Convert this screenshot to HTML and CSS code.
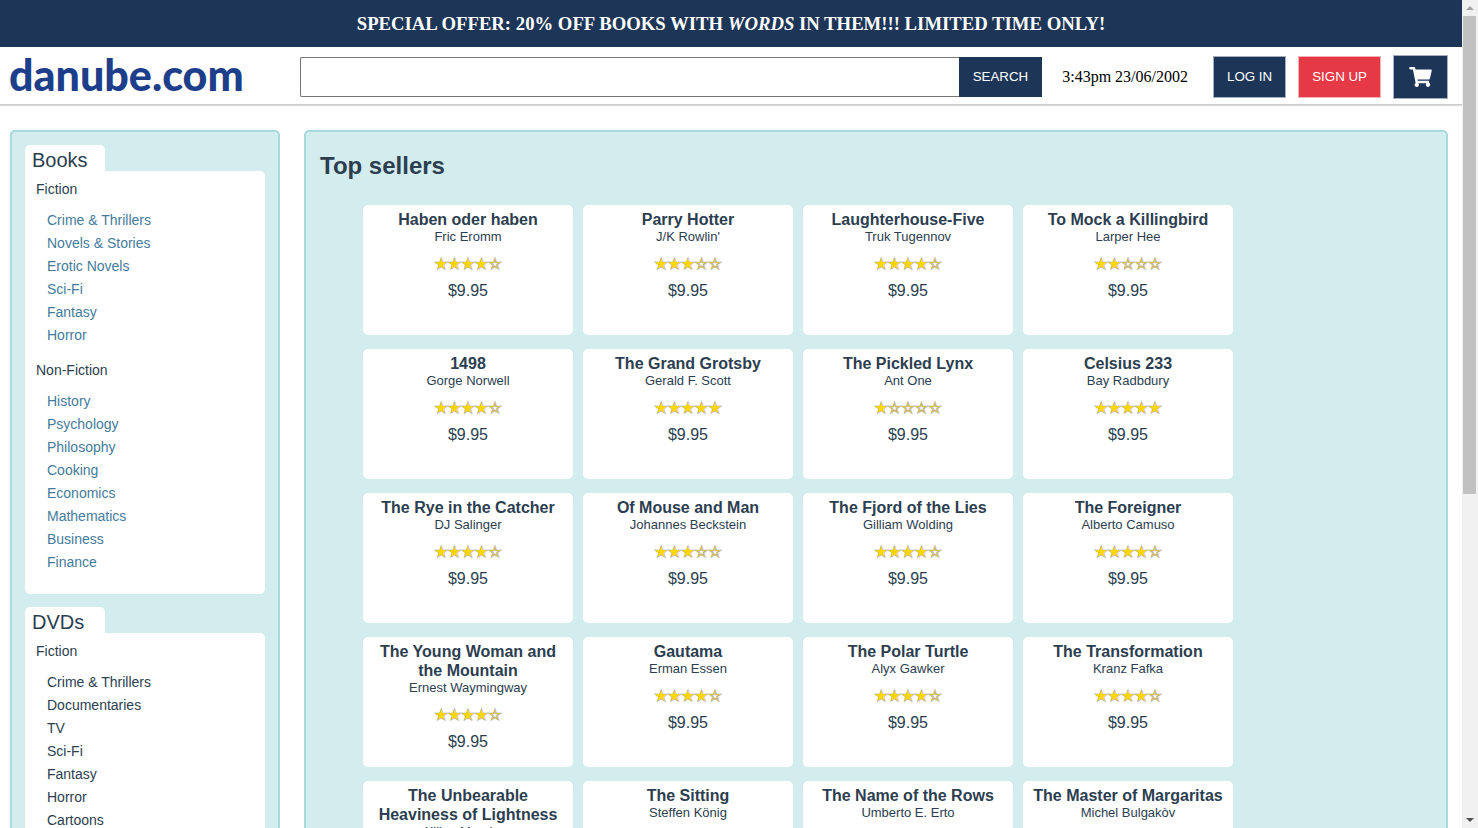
FILE: index.html
```html
<!DOCTYPE html>
<html lang="en">
<head>
<meta charset="utf-8">
<title>danube.com</title>
<link rel="stylesheet" href="styles.css">
</head>
<body>
<div class="page">
  <div class="banner"><h3 class="offer">SPECIAL OFFER: 20% OFF BOOKS WITH <em>WORDS</em> IN THEM!!! LIMITED TIME ONLY!</h3></div>
  <header class="topbar">
    <a class="logo" href="#">danube.com</a>
    <form class="search">
      <input class="search-input" type="text" aria-label="Search">
      <button class="btn search-btn" type="button">SEARCH</button>
    </form>
    <span class="clock">3:43pm 23/06/2002</span>
    <div class="actions">
      <button class="btn" type="button">LOG IN</button>
      <button class="btn btn-red" type="button">SIGN UP</button>
      <button class="btn btn-cart" type="button" aria-label="Cart">
        <svg class="cart-icon" viewBox="0 0 576 512" aria-hidden="true"><path fill="currentColor" d="M528.12 301.319l47.273-208C578.806 78.301 567.391 64 551.99 64H159.208l-9.166-44.81C147.758 8.021 137.93 0 126.529 0H24C10.745 0 0 10.745 0 24v16c0 13.255 10.745 24 24 24h69.883l70.248 343.435C147.325 417.1 136 435.222 136 456c0 30.928 25.072 56 56 56s56-25.072 56-56c0-15.674-6.447-29.835-16.824-40h209.647C430.447 426.165 424 440.326 424 456c0 30.928 25.072 56 56 56s56-25.072 56-56c0-22.172-12.888-41.332-31.579-50.405l5.517-24.276c3.413-15.018-8.002-29.319-23.403-29.319H218.117l-6.545-32h293.145c11.206 0 20.92-7.754 23.403-18.681z"/></svg>
      </button>
    </div>
  </header>
  <div class="content">
    <nav class="sidebar">
      <section class="category">
        <h2 class="tab">Books</h2>
        <div class="panel">
          <h3 class="group">Fiction</h3>
          <ul class="links">
            <li><a href="#">Crime &amp; Thrillers</a></li>
            <li><a href="#">Novels &amp; Stories</a></li>
            <li><a href="#">Erotic Novels</a></li>
            <li><a href="#">Sci-Fi</a></li>
            <li><a href="#">Fantasy</a></li>
            <li><a href="#">Horror</a></li>
          </ul>
          <h3 class="group">Non-Fiction</h3>
          <ul class="links">
            <li><a href="#">History</a></li>
            <li><a href="#">Psychology</a></li>
            <li><a href="#">Philosophy</a></li>
            <li><a href="#">Cooking</a></li>
            <li><a href="#">Economics</a></li>
            <li><a href="#">Mathematics</a></li>
            <li><a href="#">Business</a></li>
            <li><a href="#">Finance</a></li>
          </ul>
        </div>
      </section>
      <section class="category">
        <h2 class="tab">DVDs</h2>
        <div class="panel">
          <h3 class="group">Fiction</h3>
          <ul class="links">
            <li>Crime &amp; Thrillers</li>
            <li>Documentaries</li>
            <li>TV</li>
            <li>Sci-Fi</li>
            <li>Fantasy</li>
            <li>Horror</li>
            <li>Cartoons</li>
          </ul>
        </div>
      </section>
    </nav>
    <main class="shop">
      <h1 class="heading">Top sellers</h1>
      <ul class="books">
        <li class="book"><b>Haben oder haben</b><span>Fric Eromm</span><i>★★★★☆</i><p>$9.95</p></li>
        <li class="book"><b>Parry Hotter</b><span>J/K Rowlin'</span><i>★★★☆☆</i><p>$9.95</p></li>
        <li class="book"><b>Laughterhouse-Five</b><span>Truk Tugennov</span><i>★★★★☆</i><p>$9.95</p></li>
        <li class="book"><b>To Mock a Killingbird</b><span>Larper Hee</span><i>★★☆☆☆</i><p>$9.95</p></li>
        <li class="book"><b>1498</b><span>Gorge Norwell</span><i>★★★★☆</i><p>$9.95</p></li>
        <li class="book"><b>The Grand Grotsby</b><span>Gerald F. Scott</span><i>★★★★★</i><p>$9.95</p></li>
        <li class="book"><b>The Pickled Lynx</b><span>Ant One</span><i>★☆☆☆☆</i><p>$9.95</p></li>
        <li class="book"><b>Celsius 233</b><span>Bay Radbdury</span><i>★★★★★</i><p>$9.95</p></li>
        <li class="book"><b>The Rye in the Catcher</b><span>DJ Salinger</span><i>★★★★☆</i><p>$9.95</p></li>
        <li class="book"><b>Of Mouse and Man</b><span>Johannes Beckstein</span><i>★★★☆☆</i><p>$9.95</p></li>
        <li class="book"><b>The Fjord of the Lies</b><span>Gilliam Wolding</span><i>★★★★☆</i><p>$9.95</p></li>
        <li class="book"><b>The Foreigner</b><span>Alberto Camuso</span><i>★★★★☆</i><p>$9.95</p></li>
        <li class="book"><b>The Young Woman and the Mountain</b><span>Ernest Waymingway</span><i>★★★★☆</i><p>$9.95</p></li>
        <li class="book"><b>Gautama</b><span>Erman Essen</span><i>★★★★☆</i><p>$9.95</p></li>
        <li class="book"><b>The Polar Turtle</b><span>Alyx Gawker</span><i>★★★★☆</i><p>$9.95</p></li>
        <li class="book"><b>The Transformation</b><span>Kranz Fafka</span><i>★★★★☆</i><p>$9.95</p></li>
        <li class="book"><b>The Unbearable Heaviness of Lightness</b><span>Kilian Mundera</span><i>★★★★☆</i><p>$9.95</p></li>
        <li class="book"><b>The Sitting</b><span>Steffen König</span><i>★★★★☆</i><p>$9.95</p></li>
        <li class="book"><b>The Name of the Rows</b><span>Umberto E. Erto</span><i>★★★★☆</i><p>$9.95</p></li>
        <li class="book"><b>The Master of Margaritas</b><span>Michel Bulgakòv</span><i>★★★★☆</i><p>$9.95</p></li>
      </ul>
    </main>
  </div>
</div>
<div class="scrollbar" aria-hidden="true">
  <svg class="arrow" viewBox="0 0 16 16"><path fill="#a3a3a3" d="M8 6l4 4H4z"/></svg>
  <div class="track"><div class="thumb"></div></div>
  <svg class="arrow" viewBox="0 0 16 16"><path fill="#505050" d="M8 10l4-4H4z"/></svg>
</div>
</body>
</html>
```
FILE: styles.css
```css
* {
  box-sizing: border-box;
}

body {
  margin: 0;
  height: 100vh;
  display: grid;
  grid-template-columns: 1fr 16px;
  overflow: hidden;
  background: #fff;
  color: #2c3e50;
  font-family: "Liberation Sans", Arial, sans-serif;
}

h1, h2, h3, p, ul {
  margin: 0;
  padding: 0;
  list-style: none;
}

.page {
  min-height: 0;
  overflow-y: auto;
  scrollbar-width: none;
}

.banner {
  padding: 12px 0;
  background: #1d3557;
  color: #fff;
  font-family: "Liberation Serif", "Times New Roman", serif;
  line-height: 23px;
  text-align: center;
}

.topbar {
  display: flex;
  align-items: center;
  height: 58px;
  padding: 2px 14px 0 9px;
  border-bottom: 1px solid #ccc;
  box-shadow: 0 1px 1px #ddd;
}

.logo {
  width: 291px;
  padding-bottom: 3px;
  color: #1d3f8b;
  font: 900 43px/52px Lato, "Open Sans", sans-serif;
  text-decoration: none;
}

.search {
  flex: 1;
  display: flex;
}

.search-input {
  flex: 1;
  min-width: 0;
  height: 40px;
  border: 1px solid #767676;
  border-right: 0;
  border-radius: 2px 0 0 2px;
}

.btn {
  height: 42px;
  padding: 0 13px;
  border: 1px solid #a5aebc;
  background: #1d3557;
  color: #fff;
  font-family: "Liberation Sans", Arial, sans-serif;
}

.search-btn {
  height: 40px;
  border-color: #1d3557;
}

.btn-red {
  border-color: #f5b0b5;
  background: #e63946;
}

.btn-cart {
  height: 44px;
  padding: 0 15px;
}

.cart-icon {
  display: block;
  width: 23px;
  height: 20px;
}

.clock {
  margin: 0 25px 0 20px;
  color: #000;
  font: 16px/20px "Liberation Serif", "Times New Roman", serif;
}

.actions {
  display: flex;
  align-items: center;
  gap: 12px;
}

.content {
  display: grid;
  grid-template-columns: 270px 1fr;
  gap: 24px;
  padding: 25px 14px 14px 10px;
}

.sidebar,
.shop {
  border: 2px solid #a8dadc;
  border-radius: 5px;
  background: #d3eced;
}

.sidebar {
  display: flex;
  flex-direction: column;
  gap: 13px;
  padding: 13px;
}

.tab {
  width: 80px;
  padding: 4px 7px 0;
  border-radius: 5px 5px 0 0;
  background: #fff;
  font-size: 20px;
  font-weight: normal;
  line-height: 22px;
}

.panel {
  padding: 9px 11px 20px;
  border-radius: 0 5px 5px 5px;
  background: #fff;
  font-size: 14px;
}

.group {
  font-size: 14px;
  font-weight: normal;
  line-height: 18px;
}

.links {
  padding: 11px 0 0 11px;
  line-height: 23px;
}

.links + .group {
  margin-top: 14px;
}

.links a {
  color: #457b9d;
  text-decoration: none;
}

.shop {
  padding: 20px 14px;
}

.heading {
  font-size: 24px;
  line-height: 28px;
}

.books {
  display: grid;
  grid-template-columns: repeat(auto-fill, 210px);
  gap: 14px 10px;
  padding: 25px 0 0 43px;
}

.book {
  display: flex;
  flex-direction: column;
  min-height: 130px;
  padding: 5px 10px;
  border-radius: 5px;
  background: #fff;
  font-size: 16px;
  line-height: 19px;
  text-align: center;
}

.book span {
  font-size: 13px;
  line-height: 16px;
}

.book i {
  margin: 10px 0 7px;
  color: gold;
  font: 15px/19px "DejaVu Sans", sans-serif;
  -webkit-text-stroke: 1px #a8a8a8;
  paint-order: stroke fill;
}

.scrollbar {
  display: flex;
  flex-direction: column;
  background: #f1f1f1;
}

.arrow {
  width: 16px;
  height: 16px;
}

.track {
  flex: 1;
  padding: 0 2px 0 1px;
}

.thumb {
  height: 60%;
  background: #c1c1c1;
}
```
